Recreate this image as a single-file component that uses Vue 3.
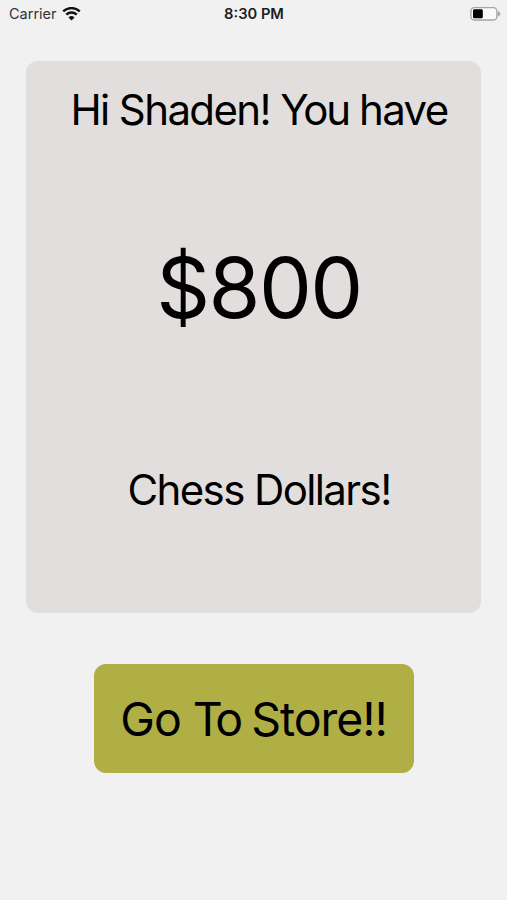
<template>
  <div class="screen">
    <header class="status-bar">
      <div class="carrier">
        <span class="carrier-name">Carrier</span>
        <svg class="wifi" width="19" height="14" viewBox="0 0 19 14">
          <path d="M1.2 4.4a12 12 0 0 1 16.6 0" />
          <path d="M4.3 7.6a7.6 7.6 0 0 1 10.4 0" />
          <path class="dot" d="M9.5 13.4L6.5 10.4a4.3 4.3 0 0 1 6 0z" />
        </svg>
      </div>
      <span class="time">8:30 PM</span>
      <svg class="battery" width="31" height="14" viewBox="0 0 31 14">
        <rect class="shell" x="0.9" y="0.6" width="26" height="12.4" rx="3.6" />
        <rect class="level" x="3" y="2.3" width="9.8" height="9" rx="1.4" />
        <path class="tip" d="M28 4.2q2.4 .9 2.4 2.6t-2.4 2.6z" />
      </svg>
    </header>

    <main class="content">
      <section class="card">
        <p class="greeting">Hi {{ name }}! <span class="you">You</span> have</p>
        <p class="amount">${{ balance }}</p>
        <p class="currency">Chess Dollars!</p>
      </section>
      <button class="store-btn">Go <span class="to">To</span> Store!!</button>
    </main>
  </div>
</template>

<script setup>
import { ref } from 'vue'

const name = ref('Shaden')
const balance = ref(800)
</script>

<style>
body {
  background: #f1f1f1;
}
</style>

<style scoped>
.screen {
  box-sizing: border-box;
  width: 507px;
  height: 900px;
  overflow: hidden;
  background: #f1f1f1;
  color: #000;
  font-family: Inter, "Liberation Sans", sans-serif;
}

.status-bar {
  box-sizing: border-box;
  display: grid;
  grid-template-columns: 1fr auto 1fr;
  align-items: center;
  height: 27px;
  padding: 0 6px 0 9px;
}

.carrier {
  display: flex;
  align-items: center;
  gap: 5px;
}

.carrier-name {
  font-size: 14.5px;
  color: #333;
}

.wifi {
  fill: none;
  stroke: #111;
  stroke-width: 2.4;
}

.wifi .dot {
  fill: #111;
  stroke: none;
}

.time {
  margin-right: 2px;
  font-size: 14.7px;
  font-weight: 600;
  color: #1c1c1c;
}

.battery {
  justify-self: end;
}

.shell {
  fill: #fafafa;
  stroke: #a5a5a5;
  stroke-width: 1.4;
}

.level {
  fill: #000;
}

.tip {
  fill: #a5a5a5;
}

.content {
  display: flex;
  flex-direction: column;
  align-items: center;
  padding-top: 34px;
}

.card {
  box-sizing: border-box;
  display: flex;
  flex-direction: column;
  align-items: center;
  width: 455px;
  height: 552px;
  padding: 24px 0 0 11px;
  border-radius: 12px;
  background: #e1dedd;
}

.card p {
  margin: 0;
  white-space: nowrap;
}

.greeting,
.currency {
  font-size: 42px;
  line-height: 50px;
  letter-spacing: -1.6px;
}

.you {
  letter-spacing: -2.3px;
}

.card .amount {
  margin-top: 103px;
  font-size: 84px;
  line-height: 100px;
  letter-spacing: -1.6px;
}

.card .currency {
  margin-top: 127px;
}

.store-btn {
  width: 320px;
  height: 109px;
  margin-top: 51px;
  padding: 0;
  border: none;
  border-radius: 12px;
  background: #b0af46;
  color: #000;
  font-family: inherit;
  font-size: 46.5px;
  line-height: 56px;
  letter-spacing: -1.1px;
  white-space: nowrap;
  cursor: pointer;
}

.to {
  letter-spacing: -3.8px;
}
</style>
